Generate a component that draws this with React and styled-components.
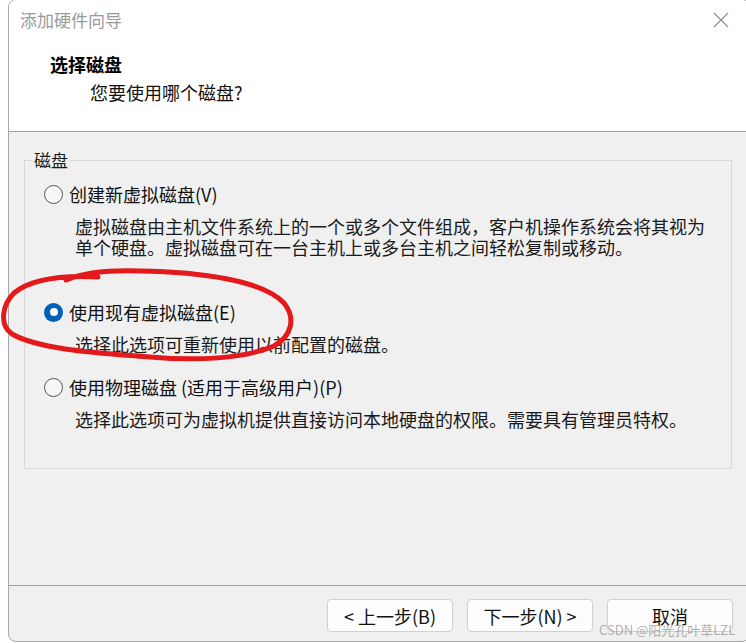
import React from 'react'
import styled, { createGlobalStyle } from 'styled-components'

const GlobalStyle = createGlobalStyle`
  html, body {
    margin: 0;
    padding: 0;
    background: #ffffff;
    overflow: hidden;
  }
  body {
    font-family: "Noto Sans CJK SC", "Liberation Sans", sans-serif;
    color: #1a1a1a;
  }
`

const options = [
  {
    label: '创建新虚拟磁盘(V)',
    lines: [
      '虚拟磁盘由主机文件系统上的一个或多个文件组成，客户机操作系统会将其视为',
      '单个硬盘。虚拟磁盘可在一台主机上或多台主机之间轻松复制或移动。',
    ],
    checked: false,
    after: 42,
  },
  {
    label: '使用现有虚拟磁盘(E)',
    lines: ['选择此选项可重新使用以前配置的磁盘。'],
    checked: true,
    after: 20,
  },
  {
    label: '使用物理磁盘 (适用于高级用户)(P)',
    lines: ['选择此选项可为虚拟机提供直接访问本地硬盘的权限。需要具有管理员特权。'],
    checked: false,
    after: 0,
  },
]

export default function App() {
  return (
    <Page>
      <GlobalStyle />
      <Window>
        <Header>
          <TitleBar>
            <Title>添加硬件向导</Title>
            <Close aria-label="关闭">
              <svg width="16" height="16" viewBox="0 0 16 16">
                <path d="M1 1 L15 15 M15 1 L1 15" stroke="#8a8a8a" strokeWidth="1.1" fill="none" />
              </svg>
            </Close>
          </TitleBar>
          <Heading>选择磁盘</Heading>
          <SubHeading>您要使用哪个磁盘?</SubHeading>
        </Header>

        <Main>
          <Group>
            <Legend>磁盘</Legend>
            <OptionList>
              {options.map((o) => (
                <Option key={o.label} $after={o.after}>
                  <OptionRow>
                    <Radio $checked={o.checked} />
                    <OptionLabel>{o.label}</OptionLabel>
                  </OptionRow>
                  <Desc>
                    {o.lines.map((l) => (
                      <DescLine key={l}>{l}</DescLine>
                    ))}
                  </Desc>
                </Option>
              ))}
            </OptionList>
          </Group>
        </Main>

        <Footer>
          <Button>&lt; 上一步(B)</Button>
          <Button>下一步(N) &gt;</Button>
          <Button>取消</Button>
        </Footer>
      </Window>

      <Scribble width="746" height="643" viewBox="0 0 746 643">
        <path
          d="M66 280 C 85 272, 110 270, 140 271 C 200 272, 262 280, 284 303 C 296 318, 292 336, 274 346 C 244 359, 196 361, 150 357 C 100 353, 40 350, 12 334 C -1 325, 2 305, 14 293 C 30 280, 60 275, 98 277"
          stroke="#e3191c"
          strokeWidth="5"
          fill="none"
          strokeLinecap="round"
        />
      </Scribble>

      <Watermark>CSDN @阳光孔叶草LZL</Watermark>
    </Page>
  )
}

const Page = styled.div`
  position: relative;
  width: 746px;
  height: 643px;
  overflow: hidden;
`

const Window = styled.div`
  margin: -1px 0 0 8px;
  width: 742px;
  height: 643px;
  box-sizing: border-box;
  border: 1px solid #a8a8a8;
  border-radius: 8px;
  overflow: hidden;
  display: flex;
  flex-direction: column;
  background: #f0f0f0;
`

const Header = styled.div`
  background: #ffffff;
  height: 132px;
  box-sizing: border-box;
  border-bottom: 1px solid #a0a0a0;
`

const TitleBar = styled.div`
  display: flex;
  align-items: center;
  justify-content: space-between;
  height: 38px;
  padding: 0 20px 0 11px;
`

const Title = styled.div`
  font-size: 17px;
  color: #9a9a9a;
`

const Close = styled.div`
  display: flex;
  width: 16px;
  height: 16px;
  margin-top: 2px;
`

const Heading = styled.div`
  margin-top: 14px;
  padding-left: 41px;
  font-size: 18px;
  line-height: 24px;
  font-weight: bold;
  color: #000;
`

const SubHeading = styled.div`
  margin-top: 4px;
  padding-left: 81px;
  font-size: 18px;
  line-height: 24px;
  color: #111;
`

const Main = styled.div`
  flex: 1;
  box-sizing: border-box;
  border-bottom: 1px solid #a0a0a0;
  padding: 17px 17px 0 15px;
`

const Group = styled.fieldset`
  margin: 0;
  height: 320px;
  box-sizing: border-box;
  border: 1px solid #d8d8d8;
  padding: 0 0 0 8px;
`

const Legend = styled.legend`
  font-size: 17px;
  line-height: 22px;
  padding: 0 1px;
  color: #1a1a1a;
`

const OptionList = styled.div`
  padding: 11px 0 0 11px;
  display: flex;
  flex-direction: column;
`

const Option = styled.div`
  margin-bottom: ${(p) => p.$after}px;
`

const OptionRow = styled.div`
  display: flex;
  align-items: center;
  height: 24px;
  gap: 6px;
`

const Radio = styled.span`
  position: relative;
  width: 19px;
  height: 19px;
  box-sizing: border-box;
  border-radius: 50%;
  border: ${(p) => (p.$checked ? 'none' : '1.5px solid #555')};
  background: ${(p) => (p.$checked ? '#005fb8' : '#f7f7f7')};
  flex-shrink: 0;
  &::after {
    content: '';
    display: ${(p) => (p.$checked ? 'block' : 'none')};
    position: absolute;
    left: 50%;
    top: 50%;
    width: 8px;
    height: 8px;
    margin: -4px 0 0 -4px;
    border-radius: 50%;
    background: #fff;
  }
`

const OptionLabel = styled.span`
  font-size: 18px;
  color: #111;
  white-space: nowrap;
`

const Desc = styled.div`
  margin-top: 10px;
  padding-left: 31px;
`

const DescLine = styled.div`
  font-size: 18px;
  line-height: 21px;
  color: #1a1a1a;
  white-space: nowrap;
`

const Footer = styled.div`
  height: 55px;
  display: flex;
  justify-content: flex-end;
  align-items: flex-start;
  gap: 14px;
  padding: 13px 16px 0 0;
  box-sizing: border-box;
`

const Button = styled.button`
  width: 126px;
  height: 33px;
  box-sizing: border-box;
  border: 1px solid #d0d0d0;
  border-radius: 4px;
  background: #fdfdfd;
  font-family: "Noto Sans CJK SC", "Liberation Sans", sans-serif;
  font-size: 18px;
  color: #111;
  padding: 0;
`

const Scribble = styled.svg`
  position: absolute;
  left: 0;
  top: 0;
  pointer-events: none;
`

const Watermark = styled.div`
  position: absolute;
  left: 599px;
  top: 620px;
  font-size: 13px;
  color: rgba(150, 150, 150, 0.75);
  white-space: nowrap;
  pointer-events: none;
`
